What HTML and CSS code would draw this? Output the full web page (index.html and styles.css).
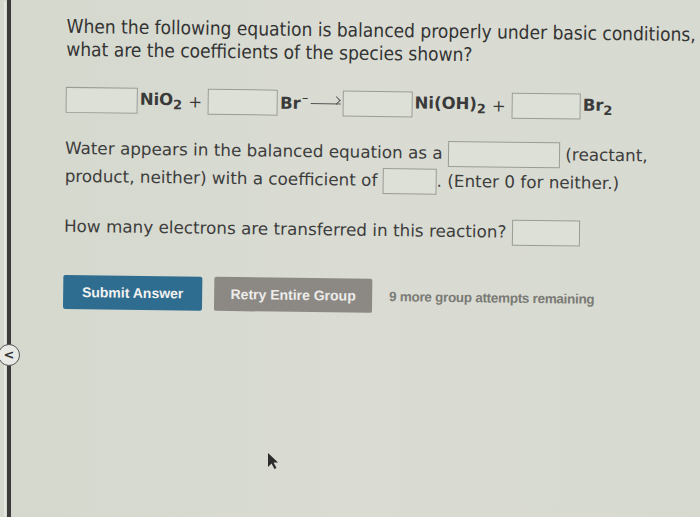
FILE: index.html
```html
<!DOCTYPE html>
<html>
<head>
<meta charset="utf-8">
<link rel="stylesheet" href="styles.css">
</head>
<body>
<div class="page">
  <div class="edge"></div>
  <div class="back">&lt;</div>
  <div class="content">
    <p class="question">When the following equation is balanced properly under basic conditions,<br>what are the coefficients of the species shown?</p>
    <div class="equation">
      <span class="box b1"></span><span class="sp">NiO<sub>2</sub></span><span class="plus">+</span>
      <span class="box b2"></span><span class="sp">Br<sup>&minus;</sup></span><span class="arrow"></span>
      <span class="box b3"></span><span class="sp">Ni(OH)<sub>2</sub></span><span class="plus">+</span>
      <span class="box b4"></span><span class="sp">Br<sub>2</sub></span>
    </div>
    <p class="para">Water appears in the balanced equation as a <span class="box wide"></span> (reactant,<br>product, neither) with a coefficient of <span class="box small"></span>. (Enter 0 for neither.)</p>
    <p class="para electrons">How many electrons are transferred in this reaction? <span class="box el"></span></p>
    <div class="actions">
      <span class="btn submit">Submit Answer</span>
      <span class="btn retry">Retry Entire Group</span>
      <span class="remaining">9 more group attempts remaining</span>
    </div>
  </div>
  <div class="cursor">
    <svg width="14" height="18" viewBox="0 0 14 18"><path d="M2 1 L2 15 L5.5 11.5 L8.5 17 L10.5 16 L7.5 10.5 L12 10.5 Z" fill="#2b2b2b"/></svg>
  </div>
</div>
</body>
</html>
```
FILE: styles.css
```css
html, body { margin: 0; padding: 0; }
body { background: #d9dcd3; }
.page {
  position: relative;
  width: 700px;
  height: 517px;
  overflow: hidden;
  background: linear-gradient(90deg, #d4d8cd 0%, #dadcd3 50%, #d7dad0 100%);
  color: #3b3b3b;
  font-family: "DejaVu Sans", Verdana, sans-serif;
}
.edge {
  position: absolute;
  left: 7px; top: 0; bottom: 0;
  width: 4px;
  background: #3d3a3a;
  box-shadow: -4px 0 0 -1px #e4e8e4;
}
.back {
  position: absolute;
  left: -2px; top: 344px;
  width: 20px; height: 20px;
  border-radius: 50%;
  background: #e9e9e6;
  border: 1px solid #555;
  font: bold 13px/20px "DejaVu Sans", sans-serif;
  text-align: center;
  color: #333;
}
.content {
  padding: 14px 0 0 67px;
  transform: rotate(0.75deg);
  transform-origin: 0 0;
}
.question {
  margin: 0;
  font-family: "DejaVu Sans Condensed", "DejaVu Sans", sans-serif;
  font-size: 19px;
  line-height: 23px;
  color: #333;
  white-space: nowrap;
}
.equation {
  display: flex;
  align-items: center;
  margin-top: 26px;
  font-weight: bold;
  font-size: 16.5px;
  color: #3a3a3a;
  white-space: nowrap;
}
.box {
  display: inline-block;
  width: 70px;
  height: 24px;
  border: 1px solid #9a9c96;
  background: #dde0d7;
  vertical-align: middle;
  box-sizing: content-box;
}
.equation .b2 { width: 68px; }
.equation .b3 { width: 68px; }
.equation .b4 { width: 67px; }
.sp { margin-left: 2px; }
.sp sub { font-size: 13px; vertical-align: -4px; }
.sp sup { font-size: 8px; vertical-align: 8px; margin-left: 1px; }
.plus { margin: 0 6px 0 6px; font-weight: normal; }
.arrow {
  position: relative;
  width: 30px;
  height: 1px;
  background: #555;
  margin: 0 2px 0 2px;
}
.arrow::after {
  content: "";
  position: absolute;
  right: 0; top: -3px;
  width: 5px; height: 5px;
  border-top: 1px solid #555;
  border-right: 1px solid #555;
  transform: rotate(45deg);
  transform-origin: 100% 0;
}
.para {
  margin: 21px 0 0;
  font-size: 16.8px;
  line-height: 28px;
  color: #3d3d3d;
  white-space: nowrap;
}
.para .box { height: 24px; }
.box.wide { width: 110px; }
.box.small { width: 52px; }
.box.el { width: 66px; }
.electrons { margin-top: 22px; }
.actions {
  display: flex;
  align-items: center;
  margin-top: 35px;
  font-family: "Liberation Sans", Arial, sans-serif;
  font-weight: bold;
  font-size: 14px;
  white-space: nowrap;
}
.btn {
  display: inline-block;
  height: 34px;
  line-height: 34px;
  border-radius: 2px;
  color: #f2f2f2;
  text-align: center;
}
.submit { background: #2f6d90; width: 139px; }
.retry { background: #8c8984; margin-left: 12px; width: 158px; color: #ececea; }
.remaining { margin-left: 17px; color: #7a7a76; font-size: 13.5px; letter-spacing: -0.3px; }
.cursor {
  position: absolute;
  left: 266px; top: 452px;
}
```
